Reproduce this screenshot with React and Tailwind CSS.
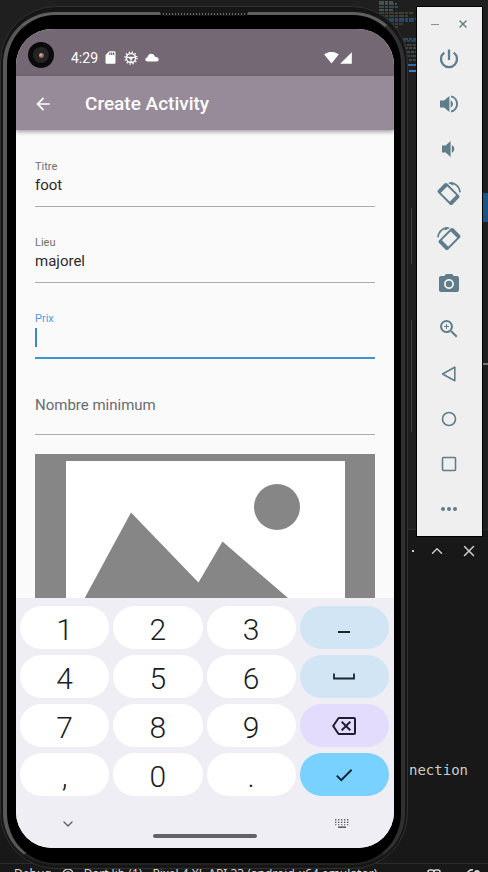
import React from "react";
import {
  MdArrowBack,
  MdSdCard,
  MdSignalWifi4Bar,
  MdSignalCellular4Bar,
  MdPhotoCamera,
  MdZoomIn,
  MdOutlineBackspace,
  MdCheck,
} from "react-icons/md";
import { ChevronDown, ChevronUp, X } from "lucide-react";

/* ---------- Drawings ---------- */

function BugIcon() {
  return (
    <svg width="14" height="14" viewBox="0 0 14 14" fill="none" stroke="white">
      <circle cx="7" cy="7" r="4.6" strokeWidth="1.5" />
      <circle cx="7" cy="7" r="6" strokeWidth="1.4" strokeDasharray="1.3 1.84" />
      <path d="M2.6 6.4h8.8M7 7v4.5M5 6.4l2 2 2-2" strokeWidth="1.2" />
    </svg>
  );
}

function CloudIcon() {
  return (
    <svg width="14" height="9" viewBox="0 0 14 9" fill="white">
      <path d="M3 8.500C1.200 8.500.300 7.500.300 6.500c0-1 .8-1.900 2-2C2.800 2.200 4.300.8 6.200.8c1.900 0 3.200 1.100 3.700 2.900 2.200 0 3.800 1.200 3.800 2.800 0 1.200-.8 2-2 2z" />
    </svg>
  );
}

function PowerIcon() {
  return (
    <svg width="22" height="22" viewBox="0 0 22 22" fill="none" stroke="#607d8b" strokeWidth="2.3">
      <path d="M11 1.500v10.500" />
      <path d="M6.300 4.600a8 8 0 1 0 9.400 0" />
    </svg>
  );
}

function VolumeUpIcon() {
  return (
    <svg width="20" height="20" viewBox="0 0 20 20" fill="#607d8b">
      <path d="M1 6.6h4L10.4 2v16L5 13.4H1z" />
      <path d="M11.6 6.2a4.2 4.2 0 0 1 0 7.6z" />
      <path d="M12 2.4a7.8 7.8 0 0 1 0 15.2" fill="none" stroke="#607d8b" strokeWidth="2" />
    </svg>
  );
}

function VolumeDownIcon() {
  return (
    <svg width="20" height="20" viewBox="0 0 20 20" fill="#607d8b">
      <path d="M3 6.6h3.6L11.600 2v16l-5-4.6H3z" />
      <path d="M12.8 6a4.400 4.400 0 0 1 0 8z" />
    </svg>
  );
}

function RotateLeftIcon() {
  return (
    <svg width="26" height="26" viewBox="0 0 26 26" fill="none" stroke="#607d8b">
      <g transform="rotate(-45 12.5 13)">
        <rect x="7" y="3.8" width="11" height="18.400" rx="1" strokeWidth="2" />
        <path d="M7 5h11M7 21h11" strokeWidth="3.4" />
      </g>
      <path d="M13.5 2.2C19 1.4 23.800 5.6 24 11.4" strokeWidth="1.6" />
      <path d="M12 2l4.500-1.300.8 3.900z" fill="#607d8b" stroke="none" />
    </svg>
  );
}

function RotateRightIcon() {
  return (
    <svg width="26" height="26" viewBox="0 0 26 26" fill="none" stroke="#607d8b">
      <g transform="rotate(45 13.5 13)">
        <rect x="8" y="3.8" width="11" height="18.400" rx="1" strokeWidth="2" />
        <path d="M8 5h11M8 21h11" strokeWidth="3.4" />
      </g>
      <path d="M12.5 2.2C7 1.4 2.200 5.6 2 11.4" strokeWidth="1.6" />
      <path d="M14 2L9.500.7l-.8 3.900z" fill="#607d8b" stroke="none" />
    </svg>
  );
}

function Outline({ children }) {
  return (
    <svg width="18" height="18" viewBox="0 0 18 18" fill="none" stroke="#607d8b" strokeWidth="1.6" strokeLinejoin="round">
      {children}
    </svg>
  );
}

function SpaceIcon() {
  return (
    <svg width="22" height="7" viewBox="0 0 22 7" fill="none" stroke="#1b2730" strokeWidth="1.8">
      <path d="M1 0.500v5h20v-5" />
    </svg>
  );
}

function KeyboardGlyph() {
  const dots = [0, 3, 6, 9, 12];
  return (
    <svg width="16" height="10" viewBox="0 0 16 10" fill="#5f6064">
      {dots.map((x) => (
        <React.Fragment key={x}>
          <rect x={x + 1} y="0" width="1.4" height="1.4" />
          <rect x={x + 1} y="2.6" width="1.4" height="1.4" />
          <rect x={x + 1} y="5.2" width="1.4" height="1" />
        </React.Fragment>
      ))}
      <rect x="4" y="7.4" width="8" height="1.6" />
    </svg>
  );
}

function PlaceholderImage() {
  return (
    <svg className="mt-[19px] block w-full shrink-0" viewBox="0 0 340 220" role="img" aria-label="Image">
      <rect width="340" height="220" fill="#868686" />
      <rect x="31" y="7" width="279" height="206" fill="#fff" />
      <circle cx="242" cy="53" r="23" fill="#868686" />
      <path d="M50 200V143.500L96 58.500l67.500 70 24-41L253 144l40 34v22z" fill="#868686" />
    </svg>
  );
}

const MINIMAP = [
  [2, 14, "#4d6b66"], [4, 18, "#5a5f50"], [7, 20, "#3d5a70"], [10, 14, "#546b5a"],
  [13, 34, "#4b4b3f"], [16, 30, "#47513f"], [19, 38, "#2f587a"], [21, 36, "#34546e"],
  [24, 24, "#3f4f3d"], [27, 20, "#4b4b3f"], [33, 8, "#3f6b8a"], [39, 24, "#335a78"],
  [41, 26, "#2d4d66"], [45, 20, "#4a4a4a"], [48, 24, "#46583f"], [52, 22, "#3b5b6a"],
  [56, 16, "#4b4b3f"], [60, 14, "#335a78"], [65, 12, "#3b78c2"], [71, 8, "#4a90f0"],
];

function Minimap() {
  return (
    <svg className="absolute top-0 right-[71px]" width="42" height="76" viewBox="0 0 42 76" fill="none">
      {MINIMAP.map(([y, w, c], i) => (
        <path key={i} d={`M${i < 11 ? 4 : 42 - w} ${y}h${w}`} stroke={c} strokeWidth="1.6" strokeDasharray={i > 17 ? "none" : "5 1 3 1"} />
      ))}
    </svg>
  );
}

/* ---------- Editor behind the emulator ---------- */

function Editor() {
  return (
    <div className="absolute inset-0 flex flex-col bg-[#1f1f1f]">
      <div className="relative h-[529px] shrink-0">
        <Minimap />
        <div className="absolute top-[193px] right-0 h-[29px] w-[5px] bg-[#17568a]" />
        <div className="absolute top-[363px] right-0 h-0.5 w-[5px] bg-[#777]" />
        <div className="absolute top-[208px] right-[76px] h-14 w-px bg-[#3c3c3c]" />
        <div className="absolute top-[320px] right-[76px] h-28 w-px bg-[#3c3c3c]" />
      </div>
      <div className="flex min-h-0 flex-1 flex-col border-t border-[#2b2b2b] bg-[#181818]">
        <div className="flex h-[42px] items-center justify-end gap-[14px] pr-[10px] text-[#cccccc]">
          <span className="h-0.5 w-0.5 bg-current" />
          <button aria-label="Maximize panel" className="flex"><ChevronUp size={18} strokeWidth={2} /></button>
          <button aria-label="Close panel" className="flex"><X size={18} strokeWidth={2} /></button>
        </div>
        <p className="mt-[188px] mr-5 text-right font-['DejaVu_Sans_Mono',monospace] text-sm leading-5 text-[#cccccc]">nection</p>
      </div>
      <div className="flex h-[9px] shrink-0 items-start gap-[10px] overflow-hidden border-t border-[#2b2b2b] bg-[#181818] pr-[7px] pl-[14px] font-['Noto_Sans',sans-serif] text-xs text-[#d6d6d6]">
        <span className="leading-5">Debug</span>
        <svg className="mt-1 shrink-0" width="12" height="12" viewBox="0 0 12 12" fill="none" stroke="#d6d6d6" strokeWidth="1.3"><circle cx="6" cy="6" r="5" /><circle cx="6" cy="6" r="2" /></svg>
        <span className="leading-5 whitespace-nowrap">Dart lib (1)</span>
        <span className="leading-5 whitespace-nowrap">Pixel 4 XL API 33 (android-x64 emulator)</span>
        <svg className="mt-[5px] ml-auto shrink-0" width="54" height="12" viewBox="0 0 54 12" fill="none" stroke="#d6d6d6" strokeWidth="1.6">
          <rect x="1" y="1" width="6" height="5" rx="2" />
          <rect x="7" y="1" width="6" height="5" rx="2" />
          <path d="M40 10V6a5 5 0 0 1 6-5" />
          <circle cx="50" cy="4" r="3" fill="#d6d6d6" stroke="none" />
        </svg>
      </div>
    </div>
  );
}

/* ---------- Phone ---------- */

function Field({ id, label, value, active, first }) {
  return (
    <div
      className={
        "flex flex-col pt-7 " +
        (active ? "border-b-2 border-[#3f93cf] pb-[9px]" : "border-b border-[#acacac] pb-[10px]") +
        (first ? " mt-px" : "")
      }
    >
      <label htmlFor={id} className={"text-[11px] leading-[15px] " + (active ? "text-[#4a9ae0]" : "text-[#6f6f6f]")}>
        {label}
      </label>
      <div className="flex h-[22px] items-center">
        {active && <span className="h-[19px] w-0.5 bg-[#388ac4]" />}
        <input id={id} defaultValue={value} className="w-full min-w-0 bg-transparent text-[15px] leading-[22px] text-[#2b2b2b] outline-none" />
      </div>
    </div>
  );
}

function Key({ label, tone = "bg-white", children }) {
  return (
    <button aria-label={label} className={"flex h-[43px] items-center justify-center rounded-full text-[30px] leading-[43px] font-light text-[#1b1c1f] " + tone}>
      {children || <span className="pt-1">{label}</span>}
    </button>
  );
}

function Keyboard() {
  return (
    <div className="flex flex-col bg-[#efeef4] pt-2">
      <div className="grid grid-cols-4 gap-x-1 gap-y-[6px] pr-[5px] pl-1">
        <Key label="1" />
        <Key label="2" />
        <Key label="3" />
        <Key label="Minus" tone="bg-[#d2e5f4]"><span className="mt-2 h-0.5 w-3 bg-[#1b2730]" /></Key>
        <Key label="4" />
        <Key label="5" />
        <Key label="6" />
        <Key label="Space" tone="bg-[#d2e5f4]"><SpaceIcon /></Key>
        <Key label="7" />
        <Key label="8" />
        <Key label="9" />
        <Key label="Delete" tone="bg-[#e4dcfd]"><MdOutlineBackspace size={24} color="#221c33" /></Key>
        <Key label="," />
        <Key label="0" />
        <Key label="." />
        <Key label="Done" tone="bg-[#79d1ff]"><MdCheck size={22} color="#0b2433" /></Key>
      </div>
      <div className="flex items-center justify-between px-[44px] pt-5 text-[#5f6064]">
        <button aria-label="Hide keyboard" className="flex"><ChevronDown size={16} strokeWidth={2} /></button>
        <button aria-label="Switch keyboard" className="flex"><KeyboardGlyph /></button>
      </div>
      <div className="mt-0.5 mb-[10px] h-1 w-[104px] self-center rounded-full bg-[#626266]" />
    </div>
  );
}

function Phone() {
  return (
    <div className="relative mt-[6px] mb-[3px] flex min-w-0 flex-1 flex-col rounded-[56px] border border-[#303030] bg-[#161616] px-[2px] pt-[5px] pb-[3px]">
      <div className="absolute top-[5px] left-1/2 z-10 h-1 w-[88px] -translate-x-1/2 rounded-b-sm border-y border-[#161616] bg-[repeating-linear-gradient(90deg,#666_0_1px,#1a1a1a_1px_3px)]" />
      <div className="flex min-h-0 flex-1 flex-col rounded-[52px] border-4 border-t-[3px] border-b-2 border-t-[#606060] border-r-[#303030] border-b-[#222222] border-l-[#585858] bg-black pt-[14px] pr-[7px] pb-[15px] pl-[9px]">
        <div className="flex min-h-0 flex-1 flex-col overflow-hidden rounded-[36px] bg-[#fafafa] font-['Roboto',sans-serif]">
          <div className="relative flex h-[47px] shrink-0 items-center bg-[#736873] pt-[10px] pr-[41px] pl-[55px] text-white">
            <span className="absolute top-[13px] left-3 flex size-[26px] items-center justify-center rounded-full bg-[#0a0a0a]">
              <span className="flex size-4 items-center justify-center rounded-full bg-[#242424]">
                <span className="size-[5px] rounded-full bg-[radial-gradient(circle_at_30%_30%,#e0b7a0,#4a3a34)]" />
              </span>
            </span>
            <span className="text-sm leading-4">4:29</span>
            <MdSdCard size={15} className="ml-[5px]" />
            <span className="ml-[6px]"><BugIcon /></span>
            <span className="ml-[7px]"><CloudIcon /></span>
            <MdSignalWifi4Bar size={15} className="ml-auto" />
            <MdSignalCellular4Bar size={14} />
          </div>
          <header className="relative z-10 flex h-[54px] shrink-0 items-center bg-[#988b99] pt-0.5 pl-[17px] text-white shadow-[0_2px_4px_rgba(0,0,0,0.35)]">
            <button aria-label="Back" className="flex"><MdArrowBack size={20} /></button>
            <h1 className="ml-8 text-[19px] leading-6 font-medium">Create Activity</h1>
          </header>
          <form className="flex min-h-0 flex-1 flex-col overflow-hidden px-[19px]">
            <Field id="titre" label="Titre" value="foot" first />
            <Field id="lieu" label="Lieu" value="majorel" />
            <Field id="prix" label="Prix" value="" active />
            <div className="border-b border-[#acacac] pt-[35px] pb-[18px]">
              <input aria-label="Nombre minimum" placeholder="Nombre minimum" className="block h-[22px] w-full bg-transparent text-[15px] leading-[22px] outline-none placeholder:text-[#6b6b6b]" />
            </div>
            <PlaceholderImage />
          </form>
          <Keyboard />
        </div>
      </div>
    </div>
  );
}

/* ---------- Emulator toolbar ---------- */

const TOOLS = [
  ["Power", <PowerIcon />],
  ["Volume up", <VolumeUpIcon />],
  ["Volume down", <VolumeDownIcon />],
  ["Rotate left", <RotateLeftIcon />],
  ["Rotate right", <RotateRightIcon />],
  ["Take screenshot", <MdPhotoCamera size={24} />],
  ["Zoom", <MdZoomIn size={24} />],
  ["Back", <Outline><path d="M14.800 2.200v13.600L2.500 9z" /></Outline>],
  ["Home", <Outline><circle cx="9" cy="9" r="6.500" /></Outline>],
  ["Overview", <Outline><rect x="2.500" y="2.500" width="13" height="13" rx="1" /></Outline>],
  ["More", <svg width="18" height="6" viewBox="0 0 18 6" fill="#607d8b"><circle cx="3" cy="3" r="2" /><circle cx="9" cy="3" r="2" /><circle cx="15" cy="3" r="2" /></svg>],
];

function Toolbar() {
  return (
    <aside className="mt-[6px] mr-[5px] ml-2 flex w-[67px] shrink-0 flex-col self-start border border-black bg-[#efefef] pr-0.5 pb-[5px] text-[#607d8b]">
      <div className="flex h-[29px] items-end justify-end gap-4 pr-[11px] pb-[6px]">
        <button aria-label="Minimize" className="flex h-3 w-3 items-center justify-center"><span className="h-px w-2 bg-[#7c929c]" /></button>
        <button aria-label="Close" className="flex"><X size={12} strokeWidth={3} /></button>
      </div>
      {TOOLS.map(([name, icon]) => (
        <button key={name} aria-label={name} className="flex h-[45px] items-center justify-center">
          {icon}
        </button>
      ))}
    </aside>
  );
}

export default function App() {
  return (
    <main className="relative flex h-screen min-h-[640px] overflow-hidden bg-[#1f1f1f]">
      <Editor />
      <div className="relative flex min-w-0 flex-1">
        <Phone />
        <Toolbar />
      </div>
    </main>
  );
}
